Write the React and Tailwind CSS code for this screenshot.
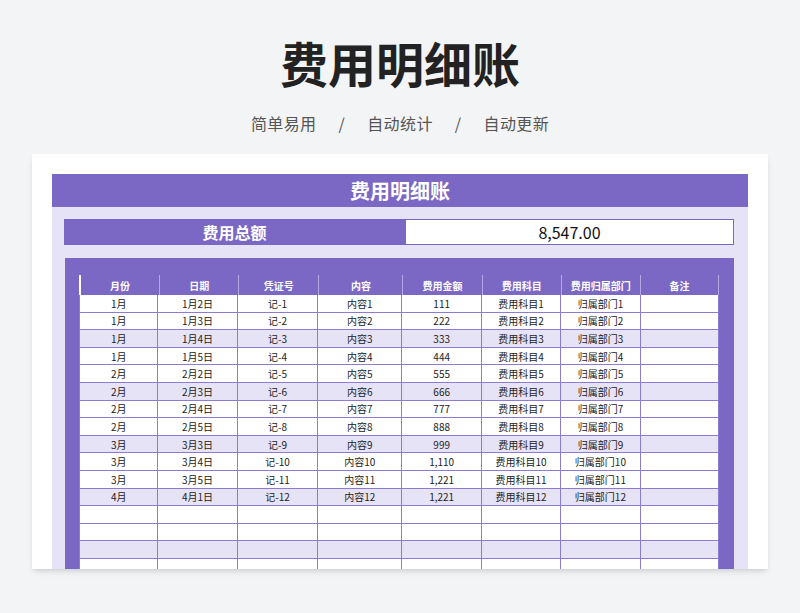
const rows = [
["1月","1月2日","记-1","内容1","111","费用科目1","归属部门1"],
["1月","1月3日","记-2","内容2","222","费用科目2","归属部门2"],
["1月","1月4日","记-3","内容3","333","费用科目3","归属部门3"],
["1月","1月5日","记-4","内容4","444","费用科目4","归属部门4"],
["2月","2月2日","记-5","内容5","555","费用科目5","归属部门5"],
["2月","2月3日","记-6","内容6","666","费用科目6","归属部门6"],
["2月","2月4日","记-7","内容7","777","费用科目7","归属部门7"],
["2月","2月5日","记-8","内容8","888","费用科目8","归属部门8"],
["3月","3月3日","记-9","内容9","999","费用科目9","归属部门9"],
["3月","3月4日","记-10","内容10","1,110","费用科目10","归属部门10"],
["3月","3月5日","记-11","内容11","1,221","费用科目11","归属部门11"],
["4月","4月1日","记-12","内容12","1,221","费用科目12","归属部门12"],
["","","","","","",""],["","","","","","",""],["","","","","","",""],["","","","","","",""],
];
const heads = ["月份","日期","凭证号","内容","费用金额","费用科目","费用归属部门","备注"];
const widths = ["w-[80px]","w-[80px]","w-[81px]","w-[85px]","w-[80px]","w-[80px]","w-[80px]","w-[79px]"];
export default function App() {
  return (
    <div className="w-[800px] h-[613px] overflow-hidden bg-[#f3f4f6] flex flex-col items-center" style={{fontFamily:'"Noto Sans CJK SC","Noto Sans",sans-serif'}}>
      <div className="mt-[30px] text-[48px] leading-[64px] font-bold text-[#222]">费用明细账</div>
      <div className="mt-[18px] text-[16px] leading-[22px] text-[#555] tracking-wide flex gap-[22px]">
        <span>简单易用</span><span>/</span><span>自动统计</span><span>/</span><span>自动更新</span>
      </div>
      <div className="mt-[20px] w-[736px] h-[415px] bg-white shadow-md pt-[20px] px-[20px] overflow-hidden">
        <div className="bg-[#7b68c4] h-[33px] flex items-center justify-center text-white font-bold text-[20px]">费用明细账</div>
        <div className="bg-[#e7e3f6] pt-[12px] pl-[12px] pr-[14px] h-[400px]">
          <div className="flex h-[26px]">
            <div className="w-[341px] bg-[#7b68c4] text-white font-bold text-[16px] flex items-center justify-center">费用总额</div>
            <div className="flex-1 bg-white border border-[#7b68c4] flex items-center justify-center text-[16px] text-[#111]">8,547.00</div>
          </div>
          <div className="mt-[13px] bg-[#7b68c4] ml-[1px] pt-[17px] pl-[14px] pr-[15px]">
            <div className="flex h-[20px] border-l-2 border-white">
              {heads.map((h,i)=>(<div key={i} className={`${widths[i]} text-white text-[10px] font-bold flex items-center justify-center border-r border-[#b3a8e3]`}>{h}</div>))}
            </div>
            {rows.map((r,ri)=>(
              <div key={ri} className={`flex h-[17.6px] ${ri%3===2?"bg-[#e7e3f6]":"bg-white"}`}>
                {[...r,""].map((c,ci)=>(<div key={ci} className={`${widths[ci]} text-[10px] text-[#222] flex items-center justify-center border-r border-b border-[#8c7bd0] ${ci===0?"border-l":""}`}>{c}</div>))}
              </div>
            ))}
          </div>
        </div>
      </div>
    </div>
  );
}
